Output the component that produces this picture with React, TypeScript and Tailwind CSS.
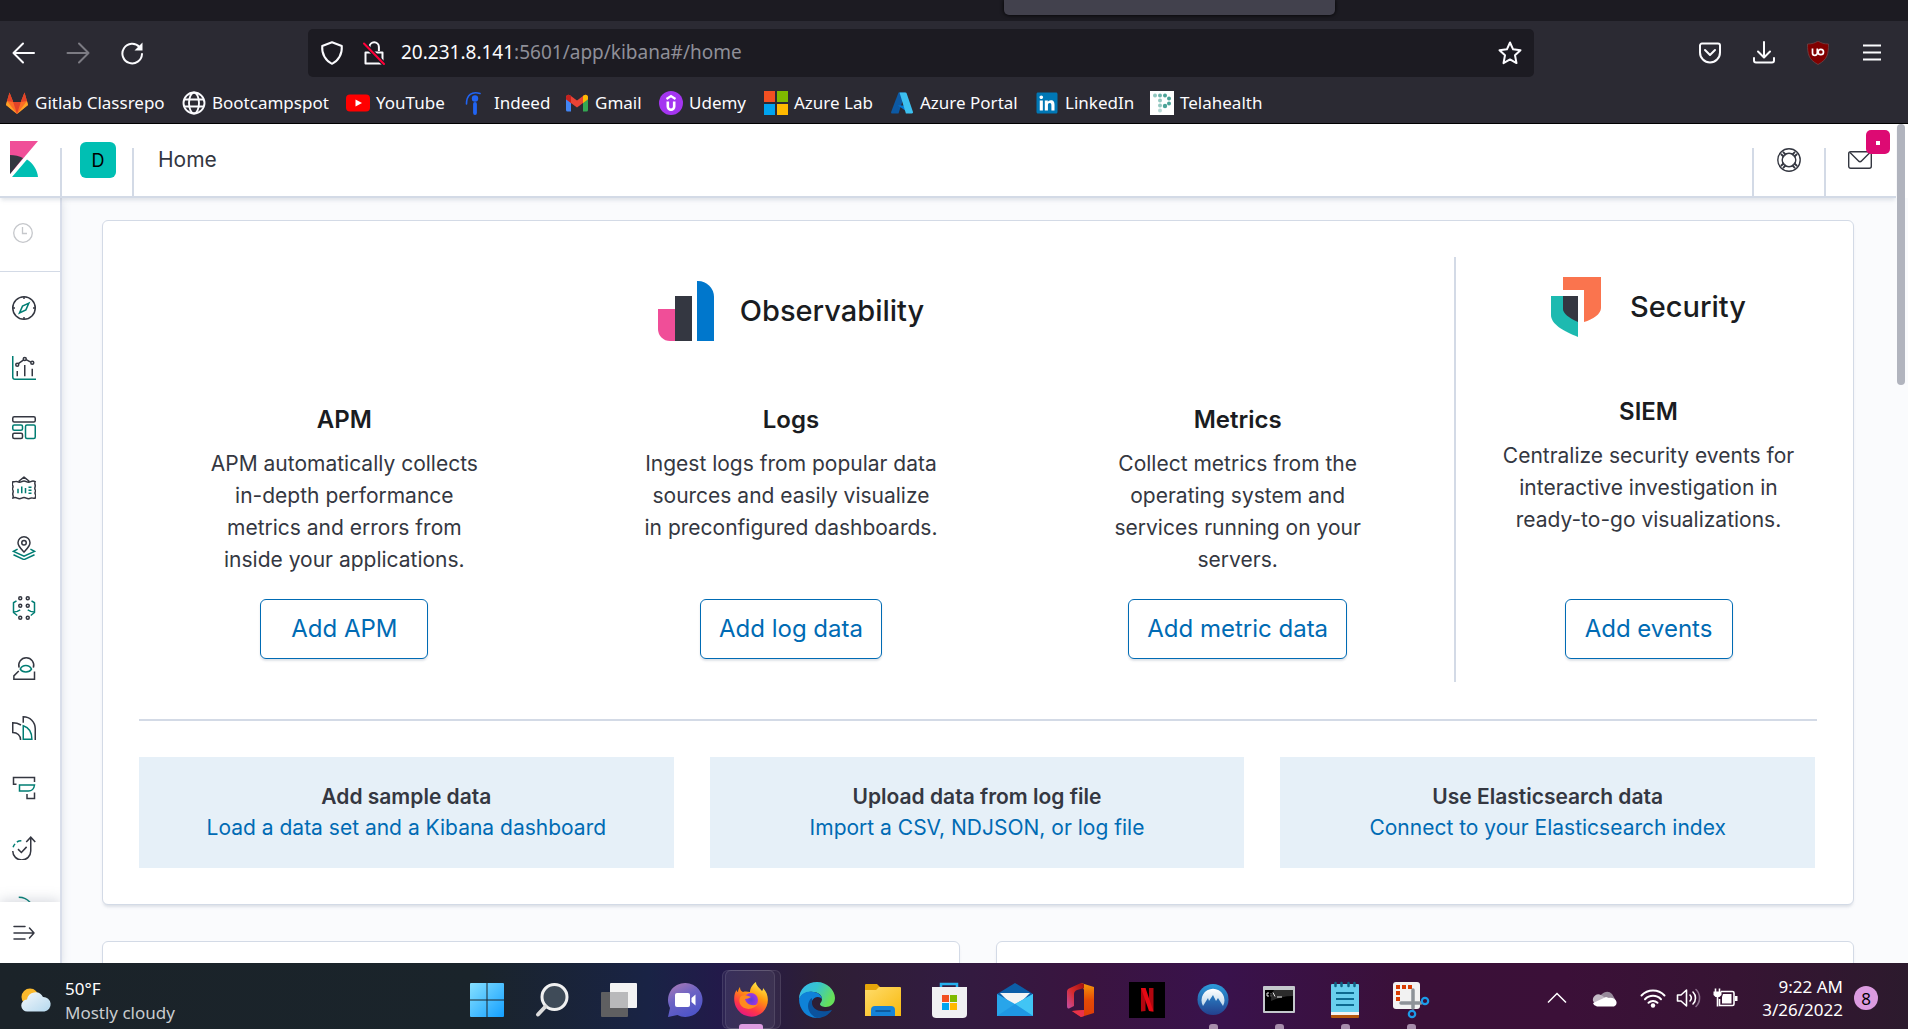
import React from "react";
import { FaLinkedin } from "react-icons/fa";

type IconProps = { children: React.ReactNode; box?: string; className?: string };

function Svg({ children, box = "0 0 24 24", className = "size-6" }: IconProps) {
  return (
    <svg viewBox={box} className={className + " shrink-0"} fill="none" aria-hidden="true">
      {children}
    </svg>
  );
}

/* ---------- Browser toolbar ---------- */

function IconButton({ label, className = "", children }: { label: string; className?: string; children: React.ReactNode }) {
  return (
    <button type="button" aria-label={label} className={"flex shrink-0 items-center justify-center " + className}>
      {children}
    </button>
  );
}

function Toolbar() {
  return (
    <div className="flex h-[62px] items-center pt-px">
      <nav className="flex w-[308px] shrink-0 items-center gap-[30px] pl-3" aria-label="History">
        <IconButton label="Back">
          <Svg>
            <path d="M22 12H1.500M11 2.500 1.500 12l9.500 9.500" stroke="#fbfbfe" strokeWidth="2" strokeLinecap="round" strokeLinejoin="round" />
          </Svg>
        </IconButton>
        <IconButton label="Forward">
          <Svg>
            <path d="M1.500 12H22.500M13 2.500l9.500 9.500-9.500 9.500" stroke="#7c7b83" strokeWidth="2" strokeLinecap="round" strokeLinejoin="round" />
          </Svg>
        </IconButton>
        <IconButton label="Reload">
          <Svg>
            <path d="M19.500 6A9.800 9.800 0 1 0 22 13" stroke="#fbfbfe" strokeWidth="2" strokeLinecap="round" />
            <path d="M22.500 1.500v8h-8z" fill="#fbfbfe" />
          </Svg>
        </IconButton>
      </nav>
      <div className="flex h-12 w-[1226px] min-w-0 items-center rounded-[5px] bg-[#1c1b22] pl-3 pr-3">
        <Svg>
          <path d="M12 1.200 21.800 5c.6 8-3.400 15-9.800 17.800C5.600 20 1.600 13 2.200 5z" stroke="#fbfbfe" strokeWidth="2" strokeLinejoin="round" />
        </Svg>
        <Svg className="ml-[18px] size-6">
          <path d="M7.500 10V6a4.700 4.700 0 0 1 9.400 0v4M3.500 11.500v11h17v-11z" stroke="#fbfbfe" strokeWidth="2" strokeLinejoin="round" />
          <path d="M2 2.500 22 23" stroke="#1c1b22" strokeWidth="4.500" />
          <path d="M2 2.500 22 23" stroke="#ff0039" strokeWidth="2" strokeLinecap="round" />
        </Svg>
        <div className="ml-[15px] min-w-0 flex-1 text-[19px] text-[#8f8f98]" aria-label="Address">
          <span className="text-[#fbfbfe]">20.231.8.141</span>:5601/app/kibana#/home
        </div>
        <IconButton label="Bookmark this page">
          <Svg>
            <path
              d="m12 1.500 3.100 6.800 7.400.9-5.500 5.100 1.500 7.800L12 18.400 5.500 22.100 7 14.300 1.500 9.200l7.400-.9z"
              stroke="#fbfbfe"
              strokeWidth="2"
              strokeLinejoin="round"
            />
          </Svg>
        </IconButton>
      </div>
      <div className="ml-auto flex shrink-0 items-center gap-[30px] pr-6">
        <IconButton label="Save to Pocket">
          <Svg>
            <path d="M4 2.500h16a2 2 0 0 1 2 2v7a10 10 0 0 1-20 0v-7a2 2 0 0 1 2-2z" stroke="#fbfbfe" strokeWidth="2" strokeLinejoin="round" />
            <path d="m7 9 5 5 5-5" stroke="#fbfbfe" strokeWidth="2" strokeLinecap="round" strokeLinejoin="round" />
          </Svg>
        </IconButton>
        <IconButton label="Downloads">
          <Svg>
            <path d="M12 1v15M6 10.500l6 6 6-6M2 17v2.500a2 2 0 0 0 2 2h16a2 2 0 0 0 2-2V17" stroke="#fbfbfe" strokeWidth="2" strokeLinecap="round" strokeLinejoin="round" />
          </Svg>
        </IconButton>
        <IconButton label="uBlock Origin">
          <Svg>
            <path d="M12 0c3 2 6 3 10.500 3 0 10-1 15.500-10.500 20.500C2.500 18.500 1.500 13 1.500 3 6 3 9 2 12 0z" fill="#800000" stroke="#6d4448" strokeWidth=".8" />
            <path d="M6.500 7.500V12a2.400 2.400 0 0 0 4.800 0V7.500" stroke="#fff" strokeWidth="1.700" />
            <circle cx="14.800" cy="11" r="2.700" stroke="#fff" strokeWidth="1.700" />
          </Svg>
        </IconButton>
        <IconButton label="Menu">
          <Svg>
            <path d="M3 4.500h18M3 11.500h18M3 18.500h18" stroke="#fbfbfe" strokeWidth="2" />
          </Svg>
        </IconButton>
      </div>
    </div>
  );
}

const bookmarks: { label: string; width: string; icon: React.ReactNode }[] = [
  {
    label: "Gitlab Classrepo",
    width: "w-[177px]",
    icon: (
      <Svg>
        <path d="M12 23 1 14 4.500 1.500 8.200 11h7.600l3.700-9.500L23 14z" fill="#fc6d26" />
        <path d="M12 23 8.200 11h7.600z" fill="#e24329" />
        <path d="M12 23 1 14l1-4z" fill="#fca326" />
        <path d="m12 23 11-9-1-4z" fill="#fca326" />
        <path d="M2 10 4.500 1.500 8.200 11z" fill="#e24329" />
        <path d="m22 10-2.500-8.500L15.800 11z" fill="#e24329" />
      </Svg>
    ),
  },
  {
    label: "Bootcampspot",
    width: "w-[164px]",
    icon: (
      <Svg>
        <g stroke="#fbfbfe" strokeWidth="1.900">
          <circle cx="12" cy="12" r="10.500" />
          <ellipse cx="12" cy="12" rx="5" ry="10.500" />
          <path d="M2 8.500h20M2 15.500h20" />
        </g>
      </Svg>
    ),
  },
  {
    label: "YouTube",
    width: "w-[118px]",
    icon: (
      <Svg>
        <rect y="3.500" width="24" height="17" rx="4" fill="#f00" />
        <path d="m9.500 8.500 6.500 3.500-6.500 3.500z" fill="#fff" />
      </Svg>
    ),
  },
  {
    label: "Indeed",
    width: "w-[101px]",
    icon: (
      <Svg>
        <circle cx="11" cy="7.500" r="3.200" fill="#2164f3" />
        <path d="M11 13v9" stroke="#2164f3" strokeWidth="3.800" strokeLinecap="round" />
        <path d="M2.500 13C2.500 4 8 0 16 2.500" stroke="#2164f3" strokeWidth="1.600" strokeLinecap="round" />
      </Svg>
    ),
  },
  {
    label: "Gmail",
    width: "w-[94px]",
    icon: (
      <Svg>
        <path d="M1 6v13a1.500 1.500 0 0 0 1.500 1.500H6V10z" fill="#4285f4" />
        <path d="M23 6v13a1.500 1.500 0 0 1-1.500 1.500H18V10z" fill="#34a853" />
        <path d="M1 6.200C1 3.800 3.400 3 5 4.200l7 5.200 7-5.200c1.600-1.200 4-.4 4 2v2l-11 8.300L1 8.200z" fill="#ea4335" />
        <path d="M18 5v7l5-3.800v-2c0-2.400-2.400-3.200-4-2z" fill="#fbbc04" />
        <path d="M6 5v7L1 8.200v-2C1 3.800 3.400 3 5 4.200z" fill="#c5221f" />
      </Svg>
    ),
  },
  {
    label: "Udemy",
    width: "w-[105px]",
    icon: (
      <Svg>
        <circle cx="12" cy="12" r="12" fill="#a435f0" />
        <path d="m7.500 8 4.500-3 4.500 3" stroke="#fff" strokeWidth="2.200" />
        <path d="M8.800 10.500v5a3.200 3.200 0 0 0 6.400 0v-5" stroke="#fff" strokeWidth="2.600" />
      </Svg>
    ),
  },
  {
    label: "Azure Lab",
    width: "w-[126px]",
    icon: (
      <Svg>
        <path d="M0 0h11v11H0z" fill="#f25022" />
        <path d="M13 0h11v11H13z" fill="#7fba00" />
        <path d="M0 13h11v11H0z" fill="#00a4ef" />
        <path d="M13 13h11v11H13z" fill="#ffb900" />
      </Svg>
    ),
  },
  {
    label: "Azure Portal",
    width: "w-[145px]",
    icon: (
      <Svg>
        <path d="M8.500 1.500h6.800L8.500 22.500H2.200a1.200 1.200 0 0 1-1.100-1.600z" fill="#0c59a4" />
        <path d="M8 14.500h9.500l2 8z" fill="#0078d4" />
        <path d="M9.500 1.500h6a1.300 1.300 0 0 1 1.200.9l6.300 18.600a1.200 1.200 0 0 1-1.100 1.500h-6z" fill="#3cc0f0" />
      </Svg>
    ),
  },
  {
    label: "LinkedIn",
    width: "w-[115px]",
    icon: (
      <span className="flex size-6 shrink-0 items-center justify-center">
        <span className="flex size-[18px] items-center justify-center bg-white">
          <FaLinkedin className="size-6 shrink-0 text-[#0077b5]" aria-hidden="true" />
        </span>
      </span>
    ),
  },
  {
    label: "Telahealth",
    width: "w-[120px]",
    icon: (
      <Svg>
        <path d="M0 0h24v24H0z" fill="#fff" />
        <g fill="#4ba398">
          <circle cx="5" cy="4.500" r="2" opacity=".6" />
          <circle cx="10" cy="4.500" r="2" opacity=".8" />
          <circle cx="15" cy="4.500" r="2" />
          <circle cx="19" cy="7.500" r="2" />
          <circle cx="19" cy="12.500" r="2" />
          <circle cx="15" cy="15" r="2.200" />
          <circle cx="10" cy="9.500" r="2" opacity=".6" />
          <circle cx="10" cy="14.500" r="2" opacity=".6" />
          <circle cx="10" cy="19.500" r="2" opacity=".4" />
        </g>
      </Svg>
    ),
  },
];

function Browser() {
  return (
    <header className="shrink-0 border-b border-black bg-[#2b2a33] font-['Noto_Sans','Open_Sans',sans-serif] text-[#fbfbfe]">
      <div className="flex h-[21px] items-start bg-[#1c1b22]">
        <div className="ml-[1004px] h-[15px] w-[331px] rounded-b-[5px] bg-[#42414d] shadow-[0_0_4px_#000]" />
      </div>
      <Toolbar />
      <nav className="flex h-10 items-center pb-px pl-[5px]" aria-label="Bookmarks">
        {bookmarks.map((b) => (
          <a key={b.label} href="#" className={"flex shrink-0 items-center gap-[6px] whitespace-nowrap text-[17px] leading-6 " + b.width}>
            {b.icon}
            {b.label}
          </a>
        ))}
      </nav>
    </header>
  );
}

/* ---------- Kibana side navigation ---------- */

const DARK = "#343741";
const TEAL = "#017d73";

const sideIcons: { label: string; art: React.ReactNode }[] = [
  {
    label: "Discover",
    art: (
      <>
        <circle cx="16" cy="16" r="15" stroke={DARK} />
        <path d="M16 1v3M16 28v3M1 16h3M28 16h3" stroke={DARK} />
        <path d="m22.500 9.500-8.500 4-4 9 8.500-4z" stroke={TEAL} />
      </>
    ),
  },
  {
    label: "Visualize",
    art: (
      <>
        <path d="M1 0v28a3 3 0 0 0 3 3h28" stroke={TEAL} />
        <path d="M7 20v7M17 12v15M27 17v10M8.500 10.200l7-5M18.800 4.800l6.200 3.300" stroke={DARK} />
        <circle cx="7" cy="11.500" r="2" stroke={DARK} />
        <circle cx="17" cy="4" r="2" stroke={DARK} />
        <circle cx="27" cy="9" r="2" stroke={DARK} />
      </>
    ),
  },
  {
    label: "Dashboard",
    art: (
      <>
        <rect x="1" y="1" width="30" height="7" rx="2" stroke={DARK} />
        <rect x="1" y="12" width="13" height="7" rx="2" stroke={TEAL} />
        <rect x="1" y="23" width="13" height="7" rx="2" stroke={DARK} />
        <rect x="18" y="12" width="13" height="18" rx="2" stroke={TEAL} />
      </>
    ),
  },
  {
    label: "Canvas",
    art: (
      <>
        <path
          d="M9 7 16 1.500 23 7M1 7.500c2 1 4-1 6 0s4 1 6 0 4-1 6 0 4 1 6 0 4-1 6 0c-1.500 2 0 3.500 0 5.500s-1.500 3.500 0 5.500-1.500 3.500 0 5.500 0 3.500 0 5.500c-2 1-4-1-6 0s-4 1-6 0-4-1-6 0-4 1-6 0-4-1-6 0c1.500-2 0-3.500 0-5.500s1.500-3.500 0-5.500 1.500-3.500 0-5.500 0-3.500 0-5.500z"
          stroke={DARK}
          strokeLinejoin="round"
        />
        <path d="M8 17v6M13 14v9M18 16v7M22 15h4M22 19h4M22 23h4" stroke={TEAL} />
      </>
    ),
  },
  {
    label: "Maps",
    art: (
      <>
        <path d="M16 21.500C12 17 8 13.500 8 9a8 8 0 0 1 16 0c0 4.500-4 8-8 12.500z" stroke={DARK} />
        <circle cx="16" cy="9" r="3" stroke={DARK} />
        <path d="m7.500 17.500-5.500 3 14 6.500 14-6.500-5.500-3M2 25l14 6.500L30 25" stroke={TEAL} />
      </>
    ),
  },
  {
    label: "Machine Learning",
    art: (
      <>
        <g stroke={DARK}>
          <circle cx="11" cy="3" r="2" />
          <circle cx="21" cy="3" r="2" />
          <circle cx="11" cy="13" r="2" />
          <circle cx="21" cy="13" r="2" />
          <circle cx="11" cy="29" r="2" />
          <circle cx="21" cy="29" r="2" />
        </g>
        <path d="M6 6.500 2 9v13l5 4M26 6.500 30 9v13l-5 4M2 21.500l5-1 4-2M30 21.500l-5-1-4-2" stroke={TEAL} strokeLinejoin="round" />
      </>
    ),
  },
  {
    label: "Metrics",
    art: (
      <>
        <path d="M9.500 15.500a10 10 0 1 1 19 0M9 20l-6.500 6.500V31H30V20.500" stroke={DARK} />
        <path d="M11 17.500c3-6.500 12-6.500 15 0-3 5-12 5-15 0z" stroke={TEAL} />
      </>
    ),
  },
  {
    label: "Logs",
    art: (
      <>
        <path d="M12 12C8.500 10 5 9 1 9v13c6 0 10.500 4 10.500 10M15 9V1c9 0 16 7 16 16v15" stroke={DARK} />
        <path d="M15 13c8 2.500 11.500 9 11.500 18H15z" stroke={TEAL} />
      </>
    ),
  },
  {
    label: "APM",
    art: (
      <>
        <path d="M6 11H2V2h28v6M20 24v6h10v-8" stroke={DARK} />
        <path d="M10 12h20c-.5 5-4 8-8 8H10z" stroke={TEAL} />
      </>
    ),
  },
  {
    label: "Uptime",
    art: (
      <>
        <path d="M1 20a12 12 0 0 0 24 0V2M19 8l6-6.500L31 8M8 17.500l4.500 4.500 7-7.500" stroke={DARK} />
        <path d="M1.500 15c.5-1.800 1.200-3 2.500-4.500M6.500 8c1.700-1 3.500-1.600 6-1.500" stroke={TEAL} />
      </>
    ),
  },
  {
    label: "SIEM",
    art: (
      <>
        <path d="M9 1.500c8 0 13 3.500 16.500 9" stroke={TEAL} />
        <path d="M9 9c6 0 9 3 11 7" stroke={TEAL} />
      </>
    ),
  },
];

function SideNav() {
  return (
    <aside className="relative z-10 flex w-[62px] shrink-0 flex-col overflow-hidden border-r-2 border-[#d9deea] bg-white shadow-[0_2px_8px_rgba(152,162,179,0.3)]">
      <div className="flex h-[74px] shrink-0 items-center border-b border-[#d3dae6] pb-1 pl-[13px]">
        <IconButton label="Recently viewed">
          <Svg box="0 0 20 20" className="size-5">
            <circle cx="10" cy="10" r="9.300" stroke="#c5c7cb" strokeWidth="1.300" />
            <path d="M9.500 4v6.500H14" stroke="#c5c7cb" strokeWidth="1.300" />
          </Svg>
        </IconButton>
      </div>
      <nav className="min-h-0 flex-1 overflow-hidden pt-[6px]" aria-label="Applications">
        {sideIcons.map((item) => (
          <a key={item.label} href="#" aria-label={item.label} className="flex h-[60px] items-center pl-3">
            <Svg box="0 0 32 32">
              <g strokeWidth="2">{item.art}</g>
            </Svg>
          </a>
        ))}
      </nav>
      <div className="flex h-[61px] shrink-0 items-center bg-white pl-3 shadow-[0_-2px_12px_rgba(120,130,150,0.3)]">
        <IconButton label="Expand navigation">
          <Svg>
            <path d="M2 5.500h11M2 12h20M2 18h11M17.500 7l4.500 5-4.500 5" stroke={DARK} strokeWidth="1.500" strokeLinecap="round" strokeLinejoin="round" />
          </Svg>
        </IconButton>
      </div>
    </aside>
  );
}

/* ---------- Kibana header ---------- */

function KibanaHeader() {
  return (
    <div className="relative z-20 shrink-0 bg-white pr-3">
      <div className="flex h-[74px] items-end border-b-2 border-[#d3dae6] shadow-[0_3px_4px_-1px_rgba(152,162,179,0.3)]">
        <a href="#" aria-label="Kibana home" className="flex h-12 w-[60px] items-start pl-[10px]">
          <svg viewBox="0 0 28 36" className="-mt-[7px] h-9 w-7" aria-hidden="true">
            <path d="M0 0h28L0 33z" fill="#f04e98" />
            <path d="M0 14v19l13-16C9.500 15 4.500 14 0 14z" fill="#343741" />
            <path d="M17 18.500 2 36h26c-.8-7.500-5-13.500-11-17.500z" fill="#00bfb3" />
          </svg>
        </a>
        <div className="flex h-12 w-[72px] items-start border-l-2 border-[#d3dae6] pl-[18px]">
          <button type="button" aria-label="Default space" className="-mt-[6px] flex size-9 items-center justify-center rounded-[6px] bg-[#00bfb3] text-[18px] text-black">
            D
          </button>
        </div>
        <nav className="flex h-12 flex-1 items-start border-l-2 border-[#d3dae6] pl-6 text-[21px] leading-6 text-[#343741]" aria-label="Breadcrumb">
          <span>Home</span>
        </nav>
        <div className="flex h-12 w-[72px] items-start justify-center border-l-2 border-[#d3dae6]">
          <IconButton label="Help">
            <Svg>
              <circle cx="12" cy="12" r="11.200" stroke={DARK} strokeWidth="1.400" />
              <circle cx="12" cy="12" r="6.800" stroke={DARK} strokeWidth="1.400" />
              <path d="M3.900 6 7 9M6 3.900 9 7M15 7l3-3.100M17 9l3.100-3M20.100 18 17 15M18 20.100 15 17M9 17l-3 3.100M7 15l-3.100 3" stroke={DARK} strokeWidth="1.800" />
            </Svg>
          </IconButton>
        </div>
        <div className="relative flex h-12 w-[72px] items-start border-l-2 border-[#d3dae6] pl-[22px]">
          <IconButton label="Newsfeed">
            <Svg>
              <rect x=".7" y="3.700" width="22.600" height="16.600" rx="2" stroke={DARK} strokeWidth="1.400" />
              <path d="m2 4.500 8.500 8.500a2 2 0 0 0 3 0L22 4.500" stroke={DARK} strokeWidth="1.400" />
            </Svg>
          </IconButton>
          <span className="absolute right-[6px] -top-[18px] flex size-6 items-center justify-center rounded-[5px] bg-[#dd0a73]">
            <span className="mt-[2px] size-1 bg-white" />
          </span>
        </div>
      </div>
    </div>
  );
}

/* ---------- Kibana home content ---------- */

function Product({ title, text, action, gap }: { title: string; text: string[]; action: string; gap: string }) {
  return (
    <section className={"flex flex-1 flex-col items-center text-center " + gap}>
      <h3 className="text-[24px] font-semibold leading-9 text-[#1a1c21]">{title}</h3>
      <p className="mt-[10px] text-[21px] leading-8 text-[#343741]">
        {text.map((line) => (
          <span key={line} className="block">
            {line}
          </span>
        ))}
      </p>
      <div className="mt-auto pb-[23px] pt-[23px]">
        <button
          type="button"
          className="block h-[60px] min-w-[168px] rounded-[6px] border border-[#006bb4] bg-white px-[18px] text-[24px] text-[#006bb4] shadow-[0_2px_2px_rgba(152,162,179,0.3)]"
        >
          {action}
        </button>
      </div>
    </section>
  );
}

const sources = [
  { title: "Add sample data", link: "Load a data set and a Kibana dashboard" },
  { title: "Upload data from log file", link: "Import a CSV, NDJSON, or log file" },
  { title: "Use Elasticsearch data", link: "Connect to your Elasticsearch index" },
];

const cardClass = "rounded-[6px] border border-[#d3dae6] bg-white shadow-[0_3px_3px_-1px_rgba(152,162,179,0.3)]";

function Home() {
  return (
    <main className="relative min-w-0 flex-1 overflow-hidden bg-[#fafbfd] pb-6 pl-10 pr-[54px] pt-[22px]">
      <div className={cardClass + " px-9 py-9"}>
        <div className="grid grid-cols-[1304fr_363fr] gap-x-[11px]">
          <div className="flex flex-col pt-6">
            <div className="flex h-[60px] items-center justify-center gap-[26px]">
              <svg viewBox="0 0 56 60" className="h-[60px] w-14" aria-hidden="true">
                <path d="M0 28h17v32h-5A12 12 0 0 1 0 48z" fill="#f04e98" />
                <path d="M17 15h17v45H17z" fill="#343741" />
                <path d="M39 0h1a16 16 0 0 1 16 16v44H39z" fill="#0077cc" />
              </svg>
              <h2 className="text-[29px] font-medium text-[#1a1c21]">Observability</h2>
            </div>
            <div className="grid flex-1 grid-cols-3 gap-x-9">
              <Product
                title="APM"
                text={["APM automatically collects", "in-depth performance", "metrics and errors from", "inside your applications."]}
                action="Add APM"
                gap="pt-[61px]"
              />
              <Product
                title="Logs"
                text={["Ingest logs from popular data", "sources and easily visualize", "in preconfigured dashboards."]}
                action="Add log data"
                gap="pt-[61px]"
              />
              <Product
                title="Metrics"
                text={["Collect metrics from the", "operating system and", "services running on your", "servers."]}
                action="Add metric data"
                gap="pt-[61px]"
              />
            </div>
          </div>
          <div className="flex flex-col border-l-2 border-[#d3dae6] pl-6 pt-5">
            <div className="flex h-[60px] items-center justify-center gap-[29px]">
              <svg viewBox="0 0 50 60" className="h-[60px] w-[50px]" aria-hidden="true">
                <path d="M12 0h38v31c0 6-8 11.500-17 14V13H12z" fill="#fa744e" />
                <path d="M0 19h27v41C12 54 0 47 0 38z" fill="#1dbab0" />
                <path d="M12 19h15v26c-9-4-15-8.500-15-13z" fill="#343741" />
              </svg>
              <h2 className="text-[29px] font-medium text-[#1a1c21]">Security</h2>
            </div>
            <Product
              title="SIEM"
              text={["Centralize security events for", "interactive investigation in", "ready-to-go visualizations."]}
              action="Add events"
              gap="pt-[57px]"
            />
          </div>
        </div>
        <hr className="mt-[37px] border-t-2 border-[#d3dae6]" />
        <div className="mt-9 grid grid-cols-3 gap-9 pr-0.5">
          {sources.map((s) => (
            <div key={s.title} className="bg-[#e6f0f8] pb-[25px] pt-6 text-center text-[21px] leading-[31px]">
              <p className="font-semibold text-[#343741]">{s.title}</p>
              <a href="#" className="block text-[#006bb4]">
                {s.link}
              </a>
            </div>
          ))}
        </div>
      </div>
      <div className="mt-9 grid grid-cols-2 gap-9">
        <div className={cardClass + " h-40"} />
        <div className={cardClass + " h-40"} />
      </div>
    </main>
  );
}

/* ---------- Windows taskbar ---------- */

const taskIcons: { label: string; state: "none" | "active" | "open"; art: React.ReactNode }[] = [
  {
    label: "Start",
    state: "none",
    art: (
      <>
        <defs>
          <linearGradient id="win" x1="0" y1="0" x2="1" y2="1" gradientUnits="objectBoundingBox">
            <stop stopColor="#86e0ff" />
            <stop offset="1" stopColor="#139fff" />
          </linearGradient>
        </defs>
        <path d="M1 2a1 1 0 0 1 1-1h15.500v16.500H1zM18.500 1H34a1 1 0 0 1 1 1v15.500H18.500zM1 18.500h16.500V35H2a1 1 0 0 1-1-1zM18.500 18.500H35V34a1 1 0 0 1-1 1H18.500z" fill="url(#win)" />
      </>
    ),
  },
  {
    label: "Search",
    state: "none",
    art: (
      <>
        <circle cx="19.500" cy="15" r="12.500" fill="#3f4b58" stroke="#f1f1f1" strokeWidth="3" />
        <path d="M10.500 24.500 3 32.500" stroke="#dcdcdc" strokeWidth="4" strokeLinecap="round" />
      </>
    ),
  },
  {
    label: "Task View",
    state: "none",
    art: (
      <>
        <rect x="9" y="1" width="27" height="25" rx="1" fill="#f3f3f3" />
        <rect y="10" width="27" height="25" rx="1" fill="#5f5f61" />
        <path d="M9 10h18v16H9z" fill="#b9b9bb" />
      </>
    ),
  },
  {
    label: "Chat",
    state: "none",
    art: (
      <>
        <defs>
          <linearGradient id="chat" x1="0" y1="0" x2="0.5" y2="1">
            <stop stopColor="#b07cb4" />
            <stop offset=".5" stopColor="#6c63c4" />
            <stop offset="1" stopColor="#4f55c8" />
          </linearGradient>
        </defs>
        <path d="M18.500 1a17 17 0 1 1-8 32L1 35l2-9A17 17 0 0 1 18.500 1z" fill="url(#chat)" />
        <rect x="8" y="11" width="15" height="14" rx="2" fill="#fff" />
        <path d="m24.500 16 4-3.500v11l-4-3.500z" fill="#fff" />
      </>
    ),
  },
  {
    label: "Firefox",
    state: "active",
    art: (
      <>
        <defs>
          <linearGradient id="fox" x1="0.8" y1="0" x2="0.3" y2="1">
            <stop stopColor="#fff44f" />
            <stop offset=".4" stopColor="#ff980e" />
            <stop offset=".75" stopColor="#ff3647" />
            <stop offset="1" stopColor="#e31587" />
          </linearGradient>
          <radialGradient id="orb">
            <stop stopColor="#5a3fd6" />
            <stop offset="1" stopColor="#a336e0" />
          </radialGradient>
        </defs>
        <path d="M7 5c0 3 1 4 3 5 3-1 5 0 7 0 0-4 3-8 6-10 0 4 4 6 6 9 1-1 1-2 1-3 7 7 6 18 0 24A17 17 0 0 1 3 25C0 19 1 10 4 8c0 1 0 2 1 2 0-2 1-4 2-5z" fill="url(#fox)" />
        <circle cx="18" cy="18" r="7" fill="url(#orb)" />
        <path d="M8 14c4-2 8 0 10 1-2 1-4 2-6 2 1 5 7 8 13 5-4 6-14 7-18 0-1-3-1-6 1-8z" fill="#ff8a1e" />
      </>
    ),
  },
  {
    label: "Edge",
    state: "none",
    art: (
      <>
        <defs>
          <linearGradient id="edgeTop" x1="0" y1="0" x2="1" y2="0.4">
            <stop stopColor="#35b8f0" />
            <stop offset=".5" stopColor="#36c4cf" />
            <stop offset="1" stopColor="#66e05a" />
          </linearGradient>
        </defs>
        <path d="M0 17C0 7 8 0 18 0s18 8 18 16c0 6-5 9-9 9-3 0-6-1-6-3 0-1 2-2 2-5 0-4-4-7-9-7C8 9 3 12 0 17z" fill="url(#edgeTop)" />
        <path d="M0 17c2-6 9-9 15-7 5 1 8 4 8 7-2-3-8-3-10 2-2 6 2 14 11 15-2 1-4 2-6 2C8 36 0 28 0 17z" fill="#0f82d8" />
        <path d="M13 19c-1 7 6 13 20 9-3 5-9 8-15 8-4-1-9-6-9-12 0-4 2-7 4-8z" fill="#0b529c" />
      </>
    ),
  },
  {
    label: "File Explorer",
    state: "none",
    art: (
      <>
        <defs>
          <linearGradient id="folder" x1="0" y1="0" x2="1" y2="1">
            <stop stopColor="#ffdc6b" />
            <stop offset="1" stopColor="#f8b90e" />
          </linearGradient>
        </defs>
        <path d="M0 3a1 1 0 0 1 1-1h11l3 3v5H0z" fill="#e5a50a" />
        <path d="M0 8h11l3-3h21a1 1 0 0 1 1 1v28H0z" fill="url(#folder)" />
        <path d="M6 34v-6a4 4 0 0 1 4-4h16a4 4 0 0 1 4 4v6z" fill="#1583d8" />
        <path d="M11 29h14" stroke="#0b4f8c" strokeWidth="1.500" strokeLinecap="round" />
      </>
    ),
  },
  {
    label: "Microsoft Store",
    state: "none",
    art: (
      <>
        <path d="M10 7V2h16v5" stroke="#25b1ee" strokeWidth="2.500" />
        <path d="M1 5h35v27a4 4 0 0 1-4 4H5a4 4 0 0 1-4-4z" fill="#f0f0f2" />
        <path d="M11 13h7v7h-7z" fill="#f25022" />
        <path d="M19 13h7v7h-7z" fill="#7fba00" />
        <path d="M11 21h7v7h-7z" fill="#00a4ef" />
        <path d="M19 21h7v7h-7z" fill="#ffb900" />
      </>
    ),
  },
  {
    label: "Mail",
    state: "none",
    art: (
      <>
        <path d="M0 12 18 1l18 11v5H0z" fill="#0c5ea8" />
        <path d="M3 11h30L20 24h-4z" fill="#f4f4f4" />
        <path d="M0 12v22h36V12L18 22z" fill="#28a5ea" />
        <path d="M36 12v22L18 22z" fill="#41c5f5" />
        <path d="m0 34 18-12 18 12z" fill="#1f97e4" />
      </>
    ),
  },
  {
    label: "Office",
    state: "none",
    art: (
      <>
        <defs>
          <linearGradient id="officeSide" x1="1" y1="0" x2="0" y2="1">
            <stop stopColor="#9c1010" />
            <stop offset=".5" stopColor="#d92a2a" />
            <stop offset="1" stopColor="#c44fa8" />
          </linearGradient>
          <linearGradient id="officeFront" x1="0" y1="0" x2="0" y2="1">
            <stop stopColor="#f59a0c" />
            <stop offset=".5" stopColor="#e64a05" />
            <stop offset="1" stopColor="#dc3c08" />
          </linearGradient>
        </defs>
        <path d="m18 1 13 4v26l-13 4-9-6 12-1V8z" fill="url(#officeFront)" />
        <path d="M18 1 7 6C4 7 4 9 4 11v12c0 4 1 4 3 3l4-2V12c0-2 1-3 3-4l7-2V2z" fill="url(#officeSide)" />
        <path d="m9 29 12-1v6l-3 1z" fill="#e8324c" />
      </>
    ),
  },
  {
    label: "Netflix",
    state: "none",
    art: (
      <>
        <path d="M0 0h36v36H0z" fill="#000" />
        <path d="M12 6h4.500v23L12 29.500zM20 6h4.500v23.500L20 29z" fill="#b1060f" />
        <path d="M12 6h4.500l8 23.500L20 29z" fill="#e50914" />
      </>
    ),
  },
  {
    label: "NordVPN",
    state: "open",
    art: (
      <>
        <defs>
          <linearGradient id="nord" x1="0" y1="0" x2="0" y2="1">
            <stop stopColor="#2c9cdc" />
            <stop offset="1" stopColor="#23408e" />
          </linearGradient>
          <linearGradient id="nordHill" x1="0" y1="0" x2="0" y2="1">
            <stop stopColor="#fff" />
            <stop offset="1" stopColor="#bcd6ea" />
          </linearGradient>
        </defs>
        <circle cx="18" cy="17.500" r="15.500" fill="url(#nord)" />
        <path d="M8 24a11.500 11.500 0 1 1 20 0l-5-8-2 3-3-6-4 6-1-3z" fill="url(#nordHill)" />
      </>
    ),
  },
  {
    label: "Command Prompt",
    state: "open",
    art: (
      <>
        <rect x="2" y="4" width="32" height="27" rx="1" fill="#c4c8cc" />
        <path d="M4 8h28v21H4z" fill="#000" />
        <path d="M13 8h19v6c-8 0-16 2-22 5 0-5 1-8 3-11z" fill="#3d3d3d" opacity=".7" />
        <path d="M8 11H6v3h2M10 11.500v.8M10 13.500v.8M12 10.500l2 4M16 15h5" stroke="#e8e8e8" strokeWidth="1" />
      </>
    ),
  },
  {
    label: "Notepad",
    state: "open",
    art: (
      <>
        <path d="M4 30h28v5a1 1 0 0 1-1 1H5a1 1 0 0 1-1-1z" fill="#b5580e" />
        <path d="M4 29h28v4H4z" fill="#f2f2f2" />
        <path d="M4 3a1 1 0 0 1 1-1h26a1 1 0 0 1 1 1v27H4z" fill="#69cfee" />
        <path d="M8.500 1v3M14.500 1v3M21.500 1v3M27.500 1v3" stroke="#0e6283" strokeWidth="2.500" strokeLinecap="round" />
        <path d="M9 11h18M9 17h18M9 23h18" stroke="#0d6a90" strokeWidth="2" />
      </>
    ),
  },
  {
    label: "Snipping Tool",
    state: "open",
    art: (
      <>
        <rect x="0" y="0" width="27" height="27" rx="3" fill="#f2f2f2" />
        <path d="M3 3h4v4H3zM9 3h4v4H9zM15 3h4v4h-4zM3 9h4v4H3zM3 15h4v4H3z" fill="#d83b01" />
        <path d="M20 8v18M8 21h20" stroke="#8d9298" strokeWidth="3.500" strokeLinecap="round" />
        <circle cx="19" cy="32" r="3.200" stroke="#1c9be8" strokeWidth="2.200" />
        <circle cx="32" cy="19" r="3.200" stroke="#1c9be8" strokeWidth="2.200" />
      </>
    ),
  },
];

function Taskbar() {
  return (
    <footer className="relative z-30 flex h-[66px] shrink-0 items-stretch bg-[linear-gradient(90deg,#1b2329_0%,#1a242b_25%,#192345_34%,#23194a_38%,#2e1f35_43%,#321b40_50%,#3a1440_57%,#39124c_64%,#3a1038_74%,#3b1038_82%,#361433_91%,#2c1a2d_100%)] font-['Noto_Sans','Open_Sans',sans-serif] text-[17px] text-white">
      <div className="flex w-[454px] shrink-0 items-center pl-[21px]">
        <Svg box="0 0 31 24" className="mt-2 h-6 w-[31px]">
          <defs>
            <linearGradient id="cloud" x1="0" y1="0" x2="1" y2="1">
              <stop stopColor="#f4f8fc" />
              <stop offset="1" stopColor="#b4d8ee" />
            </linearGradient>
          </defs>
          <circle cx="9" cy="9" r="8.500" fill="#fbb92c" />
          <path d="M6.500 23.500a6 6 0 0 1-.5-12 8.500 8.500 0 0 1 16-2.500 7.300 7.300 0 0 1 1.500 14.500z" fill="url(#cloud)" />
        </Svg>
        <div className="ml-[13px] mt-[9px] leading-6">
          <div>50°F</div>
          <div className="text-[#c9cccf]">Mostly cloudy</div>
        </div>
      </div>
      <nav className="flex items-stretch" aria-label="Pinned apps">
        {taskIcons.map((item) => (
          <button key={item.label} type="button" aria-label={item.label} className="relative flex w-[66px] items-start justify-center pt-[19px]">
            {item.state === "active" && (
              <>
                <span className="absolute bottom-0 right-[3px] top-[7px] w-14 rounded-[6px] border border-white/10 bg-white/5" />
                <span className="absolute bottom-0 left-1 top-[7px] w-[53px] rounded-[6px] border border-white/10 bg-white/5" />
                <span className="absolute bottom-0 left-[21px] h-[5px] w-6 rounded-t-[3px] bg-[#dc9be0]" />
              </>
            )}
            {item.state === "open" && <span className="absolute bottom-0 left-[29px] h-[5px] w-[9px] rounded-t-[3px] bg-[#a78dab]" />}
            <Svg box="0 0 36 36" className="relative size-9 overflow-visible">
              {item.art}
            </Svg>
          </button>
        ))}
      </nav>
      <div className="ml-auto flex items-center pr-[30px] pt-1">
        <IconButton label="Show hidden icons">
          <Svg box="0 0 20 12" className="h-3 w-5">
            <path d="m1 10.500 9-9 9 9" stroke="#fff" strokeWidth="1.500" />
          </Svg>
        </IconButton>
        <Svg box="0 0 26 18" className="ml-[25px] h-[18px] w-[26px]">
          <path d="M8 9a7 7 0 0 1 12-4l3 5-14 3z" fill="#978a9a" />
          <path d="M1 12a5.500 5.500 0 0 1 8-6l12 8-16 3z" fill="#c3bbc5" />
          <path d="M4 17a4 4 0 0 1-3-3l13-6 3 1c6-1 9 4 7 7l-2 1.500H5z" fill="#fff" />
        </Svg>
        <Svg box="0 0 26 20" className="ml-[22px] h-5 w-[26px]">
          <g stroke="#fff" strokeWidth="2" strokeLinecap="round">
            <path d="M1.500 7.500a16 16 0 0 1 23 0M5 11.300a11 11 0 0 1 16 0M8.500 14.800a6.500 6.500 0 0 1 9 0" />
          </g>
          <circle cx="13" cy="17.500" r="2.200" fill="#fff" />
        </Svg>
        <Svg box="0 0 26 20" className="ml-[10px] h-5 w-[26px]">
          <path d="M1.500 7h3.500l5.500-5v16L5 13H1.500z" stroke="#fff" strokeWidth="1.600" strokeLinejoin="round" />
          <path d="M14 7a4.500 4.500 0 0 1 0 6M17 4a8.500 8.500 0 0 1 0 12" stroke="#fff" strokeWidth="1.600" strokeLinecap="round" />
          <path d="M20 1.500a12 12 0 0 1 0 17" stroke="#8a6d8a" strokeWidth="1.600" strokeLinecap="round" />
        </Svg>
        <Svg box="0 0 26 20" className="ml-[10px] h-5 w-[26px]">
          <path d="M9 3.500h11.500A1.500 1.500 0 0 1 22 5v11a1.500 1.500 0 0 1-1.500 1.500H7.500V11" stroke="#fff" strokeWidth="1.600" />
          <path d="M11 6h8.500v9.500H10V9z" fill="#fff" />
          <path d="M23 8h2.500v5H23z" fill="#fff" />
          <path d="M1.500 3.500h8V7L7.500 9h-4l-2-2z" fill="#fff" />
          <path d="M3.500 4V.5M7.500 4V.5M5.500 8v10.500" stroke="#fff" strokeWidth="1.600" />
        </Svg>
        <div className="ml-[17px] w-[88px] text-right leading-[23px]">
          <div>9:22 AM</div>
          <div>3/26/2022</div>
        </div>
        <button type="button" aria-label="Notifications" className="ml-[11px] flex size-6 items-center justify-center rounded-full bg-[#dc9be0] text-[17px] leading-none text-black">
          8
        </button>
      </div>
    </footer>
  );
}

export default function App() {
  return (
    <div className="flex h-screen flex-col overflow-hidden bg-white font-['Inter',sans-serif]">
      <Browser />
      <div className="relative flex min-h-0 flex-1 flex-col">
        <KibanaHeader />
        <div className="flex min-h-0 flex-1">
          <SideNav />
          <Home />
        </div>
        <div className="absolute right-[3px] top-0 z-20 h-[261px] w-2 rounded-[4px] bg-[#b1b4be]" />
      </div>
      <Taskbar />
    </div>
  );
}
